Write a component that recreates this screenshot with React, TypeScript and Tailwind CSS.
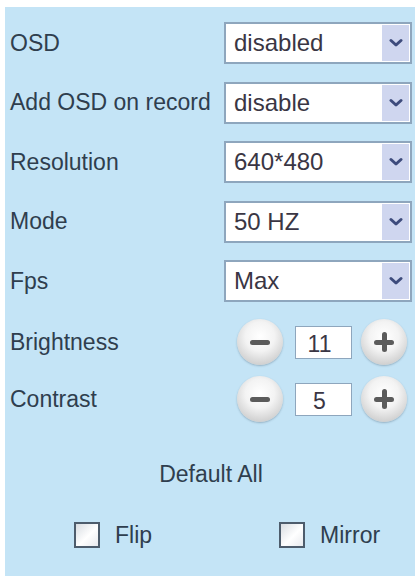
import { useState } from "react";

type SelectRowProps = {
  label: string;
  value: string;
  options: string[];
};

function Chevron() {
  return (
    <svg width="14" height="10" viewBox="0 0 14 10" fill="none">
      <path d="M2 2.5 L7 7 L12 2.5" stroke="#3d4b7c" strokeWidth="3" strokeLinecap="round" strokeLinejoin="round" />
    </svg>
  );
}

function SelectRow({ label, value, options }: SelectRowProps) {
  const [current, setCurrent] = useState(value);
  return (
    <div className="flex h-[42px] items-center justify-between">
      <span className="text-[23px] leading-none">{label}</span>
      <label className="relative flex h-[42px] w-[188px] items-center border-2 border-[#8ea6bd] bg-white">
        <select
          value={current}
          onChange={(e) => setCurrent(e.target.value)}
          className="h-full w-full appearance-none bg-transparent pl-[8px] text-[24px] text-[#3a3644] outline-none"
        >
          {options.map((o) => (
            <option key={o}>{o}</option>
          ))}
        </select>
        <span className="pointer-events-none absolute right-[1px] top-[1px] bottom-[1px] flex w-[27px] items-center justify-center bg-[#cfd6ef]">
          <Chevron />
        </span>
      </label>
    </div>
  );
}

function RoundButton({ sign, onClick }: { sign: "-" | "+"; onClick: () => void }) {
  return (
    <button
      onClick={onClick}
      className="relative flex h-[46px] w-[46px] items-center justify-center rounded-full bg-[radial-gradient(circle_at_50%_38%,#ffffff_0%,#f3f3f3_40%,#d2d2d2_75%,#a9a9a9_100%)] shadow-[0_1px_2px_rgba(60,80,100,0.35)]"
    >
      <span className="absolute h-[5px] w-[20px] rounded-full bg-[#5b5b5b]" />
      {sign === "+" && <span className="absolute h-[20px] w-[5px] rounded-full bg-[#5b5b5b]" />}
    </button>
  );
}

function StepperRow({ label, initial }: { label: string; initial: number }) {
  const [n, setN] = useState(initial);
  return (
    <div className="flex h-[48px] items-center justify-between pr-[5px]">
      <span className="text-[23px] leading-none">{label}</span>
      <div className="flex items-center">
        <RoundButton sign="-" onClick={() => setN(n - 1)} />
        <div className="ml-[12px] mr-[9px] flex h-[33px] w-[57px] items-center justify-center border border-[#8ea6bd] bg-white pr-[8px] pt-[4px] text-[23px] text-[#3a3644]">
          {n}
        </div>
        <RoundButton sign="+" onClick={() => setN(n + 1)} />
      </div>
    </div>
  );
}

function Check({ label }: { label: string }) {
  const [on, setOn] = useState(false);
  return (
    <label className="flex items-center gap-[15px] text-[23px] leading-none">
      <span
        onClick={() => setOn(!on)}
        className="flex h-[26px] w-[26px] items-center justify-center border-2 border-[#4d5c6c] bg-[linear-gradient(135deg,#d9dde2,#ffffff_55%,#e8eaee)]"
      >
        {on && <span className="h-[10px] w-[10px] bg-[#4d5c6c]" />}
      </span>
      {label}
    </label>
  );
}

export default function App() {
  return (
    <div className="h-[576px] w-[418px] bg-white pl-[5px] pr-[3px] pt-[7px] font-['Liberation_Sans',Arial,sans-serif]">
      <div className="flex h-full flex-col bg-[#c4e4f6] pl-[5px] pr-[3px] pt-[15px] text-[#2f3e4e]">
        <div className="flex flex-col gap-[17.5px]">
          <SelectRow label="OSD" value="disabled" options={["disabled", "enabled"]} />
          <SelectRow label="Add OSD on record" value="disable" options={["disable", "enable"]} />
          <SelectRow label="Resolution" value="640*480" options={["640*480", "320*240"]} />
          <SelectRow label="Mode" value="50 HZ" options={["50 HZ", "60 HZ", "Outdoor"]} />
          <SelectRow label="Fps" value="Max" options={["Max", "20", "15", "10", "5"]} />
        </div>
        <div className="mt-[16px] flex flex-col gap-[9px]">
          <StepperRow label="Brightness" initial={11} />
          <StepperRow label="Contrast" initial={5} />
        </div>
        <button className="mt-[40px] self-center text-[23px] leading-none text-[#2f3e4e]">Default All</button>
        <div className="mt-[36px] flex items-center pl-[64px]">
          <Check label="Flip" />
          <div className="ml-[127px]">
            <Check label="Mirror" />
          </div>
        </div>
      </div>
    </div>
  );
}
